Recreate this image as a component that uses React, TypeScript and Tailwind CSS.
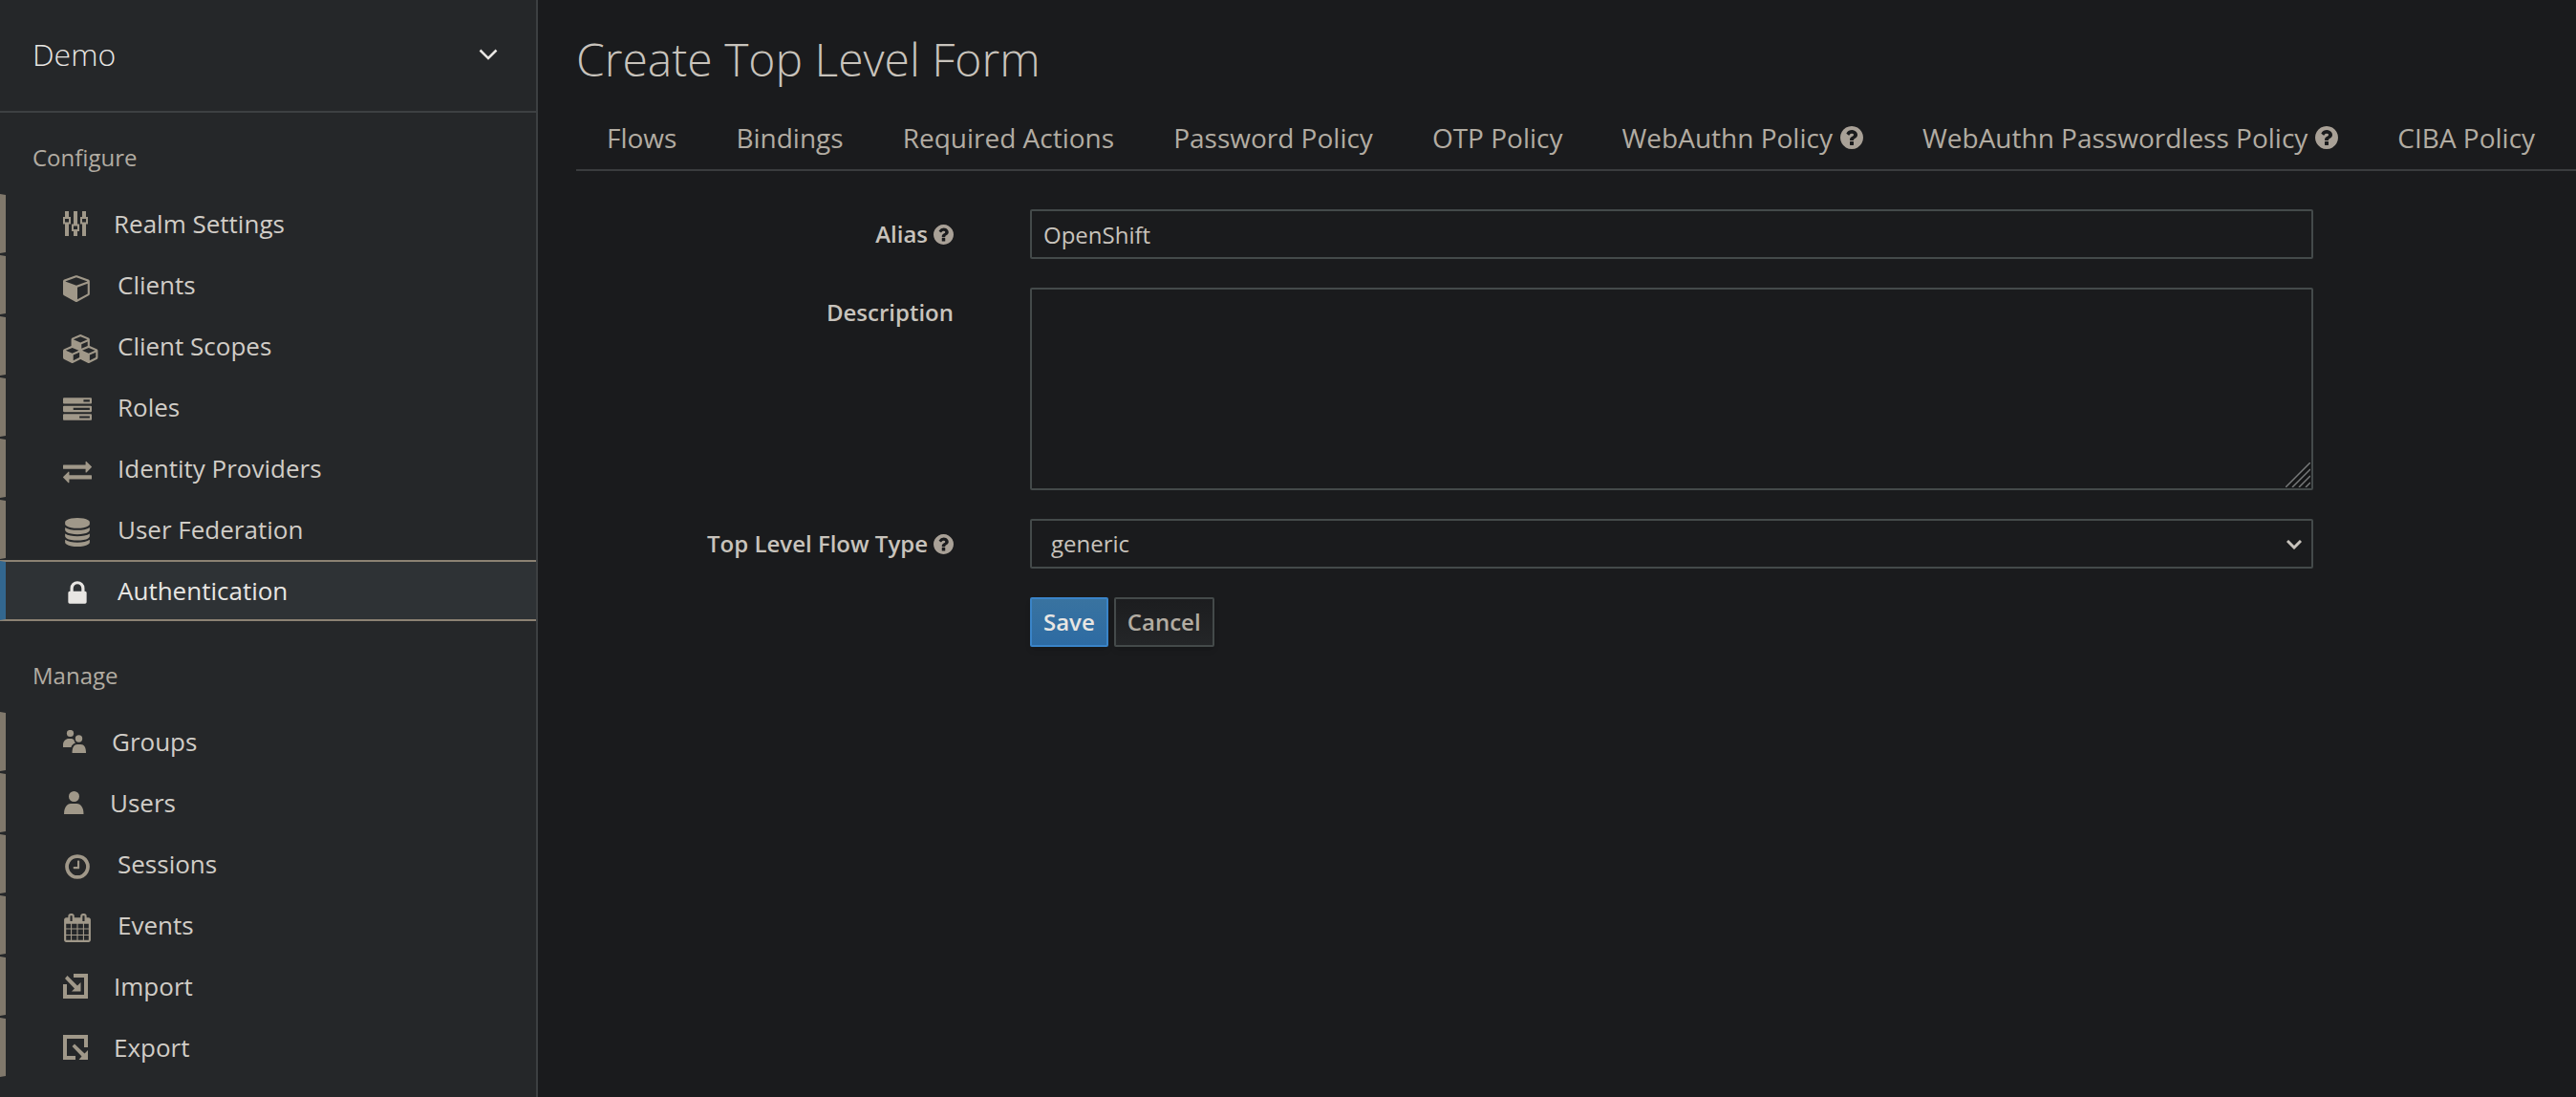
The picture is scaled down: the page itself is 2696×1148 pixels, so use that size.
import React from "react";

const PATHS = {
  cube: "M896 1629l640-349v-636l-640 233v752zm-64-865l698-254-698-254-698 254 698 254zm832-252v768q0 35-18 65t-49 47l-704 384q-28 16-61 16t-61-16l-704-384q-31-17-49-47t-18-65v-768q0-40 23-73t61-47l704-256q22-8 44-8t44 8l704 256q38 14 61 47t23 73z",
  cubes:
    "M640 1632l384-192v-314l-384 164v342zm-64-454l404-173-404-173-404 173 404 173zm1088 454l384-192v-314l-384 164v342zm-64-454l404-173-404-173-404 173 404 173zm-448-293l384-165v-266l-384 164v267zm-64-379l441-189-441-189-441 189 441 189zm1088 518v416q0 36-19 67t-52 47l-448 224q-25 14-57 14t-57-14l-448-224q-4-2-7-4-2 2-7 4l-448 224q-25 14-57 14t-57-14l-448-224q-33-16-52-47t-19-67v-416q0-38 21.5-70t56.5-48l434-186v-400q0-38 21.5-70t56.5-48l448-192q23-10 50-10t50 10l448 192q35 16 56.5 48t21.5 70v400l434 186q36 16 57 48t21 70z",
  tasks:
    "M1024 1408h640v-128h-640v128zm-384-512h1024v-128h-1024v128zm640-512h384v-128h-384v128zm512 832v256q0 26-19 45t-45 19h-1664q-26 0-45-19t-19-45v-256q0-26 19-45t45-19h1664q26 0 45 19t19 45zm0-512v256q0 26-19 45t-45 19h-1664q-26 0-45-19t-19-45v-256q0-26 19-45t45-19h1664q26 0 45 19t19 45zm0-512v256q0 26-19 45t-45 19h-1664q-26 0-45-19t-19-45v-256q0-26 19-45t45-19h1664q26 0 45 19t19 45z",
  exchange:
    "M1792 1184v192q0 13-9.500 22.500t-22.500 9.500h-1376v192q0 13-9.500 22.500t-22.500 9.500q-12 0-24-10l-319-320q-9-9-9-22 0-14 9-23l320-320q9-9 23-9 13 0 22.500 9.500t9.500 22.500v192h1376q13 0 22.500 9.500t9.500 22.500zm0-544q0 14-9 23l-320 320q-9 9-23 9-13 0-22.500-9.500t-9.500-22.500v-192h-1376q-13 0-22.500-9.500t-9.500-22.500v-192q0-13 9.500-22.500t22.500-9.500h1376v-192q0-14 9-23t23-9q12 0 24 10l319 319q9 9 9 23z",
  database:
    "M896 768q237 0 443-43t325-127v170q0 69-103 128t-280 93.500-385 34.500-385-34.500-280-93.500-103-128v-170q119 84 325 127t443 43zm0 768q237 0 443-43t325-127v170q0 69-103 128t-280 93.500-385 34.500-385-34.500-280-93.500-103-128v-170q119 84 325 127t443 43zm0-384q237 0 443-43t325-127v170q0 69-103 128t-280 93.500-385 34.500-385-34.500-280-93.500-103-128v-170q119 84 325 127t443 43zm0-1152q208 0 385 34.500t280 93.500 103 128v128q0 69-103 128t-280 93.500-385 34.500-385-34.500-280-93.500-103-128v-128q0-69 103-128t280-93.500 385-34.500z",
  lock: "M640 768h512v-192q0-106-75-181t-181-75-181 75-75 181v192zm832 96v576q0 40-28 68t-68 28h-960q-40 0-68-28t-28-68v-576q0-40 28-68t68-28h32v-192q0-184 132-316t316-132 316 132 132 316v192h32q40 0 68 28t28 68z",
  clock:
    "M1024 544v448q0 14-9 23t-23 9h-320q-14 0-23-9t-9-23v-64q0-14 9-23t23-9h224v-352q0-14 9-23t23-9h64q14 0 23 9t9 23zm416 352q0-148-73-273t-198-198-273-73-273 73-198 198-73 273 73 273 198 198 273 73 273-73 198-198 73-273zm224 0q0 209-103 385.500t-279.500 279.500-385.500 103-385.500-103-279.500-279.500-103-385.500 103-385.500 279.500-279.500 385.500-103 385.500 103 279.500 279.500 103 385.500z",
  calendar:
    "M192 1664h288v-288h-288v288zm352 0h320v-288h-320v288zm-352-352h288v-320h-288v320zm352 0h320v-320h-320v320zm-352-384h288v-288h-288v288zm736 736h320v-288h-320v288zm-384-736h320v-288h-320v288zm768 736h288v-288h-288v288zm-384-352h320v-320h-320v320zm-352-864v-288q0-13-9.500-22.500t-22.500-9.500h-64q-13 0-22.500 9.500t-9.500 22.500v288q0 13 9.500 22.500t22.500 9.500h64q13 0 22.500-9.500t9.500-22.500zm736 864h288v-320h-288v320zm-384-384h320v-288h-320v288zm384 0h288v-288h-288v288zm32-480v-288q0-13-9.500-22.500t-22.500-9.500h-64q-13 0-22.500 9.500t-9.500 22.500v288q0 13 9.500 22.500t22.500 9.500h64q13 0 22.500-9.500t9.500-22.500zm384-64v1280q0 52-38 90t-90 38h-1408q-52 0-90-38t-38-90v-1280q0-52 38-90t90-38h128v-96q0-66 47-113t113-47h64q66 0 113 47t47 113v96h384v-96q0-66 47-113t113-47h64q66 0 113 47t47 113v96h128q52 0 90 38t38 90z",
  question:
    "M1024 1376v-192q0-14-9-23t-23-9h-192q-14 0-23 9t-9 23v192q0 14 9 23t23 9h192q14 0 23-9t9-23zm256-672q0-88-55.500-163t-138.500-116-170-41q-243 0-371 213-15 24 8 42l132 100q7 6 19 6 16 0 25-12 53-68 86-92 34-24 86-24 48 0 85.500 26t37.500 59q0 38-20 61t-68 45q-63 28-115.500 86.500t-52.500 125.500v36q0 14 9 23t23 9h192q14 0 23-9t9-23q0-19 21.500-49.500t54.500-49.500q32-18 49-28.500t46-35 44.500-48 28-60.500 12.500-81zm384 192q0 209-103 385.500t-279.500 279.500-385.500 103-385.500-103-279.500-279.500-103-385.500 103-385.500 279.500-279.500 385.500-103 385.500 103 279.500 279.500 103 385.500z",
};

function Glyph({ path }: { path: string }) {
  return (
    <svg viewBox="0 0 1792 1792" className="mt-1.5 size-[30px] shrink-0 overflow-visible" fill="currentColor" aria-hidden="true">
      <path d={path} />
    </svg>
  );
}

function SlidersIcon() {
  return (
    <svg viewBox="0 0 26 26" className="size-[26px] shrink-0" fill="none" stroke="currentColor" aria-hidden="true">
      <path strokeWidth="4" d="M4 0v7M4 13v13M13 0v14M13 21v5M22 0v7M22 13v13" />
      <path strokeWidth="2" d="M1 7h6v5.500h-6zM10 14.500h6v5.500h-6zM19 7h6v5.500h-6z" />
    </svg>
  );
}

function GroupsIcon() {
  return (
    <svg viewBox="0 0 24 24" className="size-6 shrink-0" fill="currentColor" aria-hidden="true">
      <circle cx="7.500" cy="3.500" r="3.600" />
      <path d="M0 18v-2.500C0 11.500 3 9 6 9h3q1.500 0 2.500 1.500 .3 2 1.500 3Q9 15 8.500 18z" />
      <circle cx="16.500" cy="9" r="3.700" />
      <path d="M9.500 24c0-6 2-9 5.500-9h3.500c3.500 0 5.500 3 5.500 9z" />
    </svg>
  );
}

function UserIcon() {
  return (
    <svg viewBox="0 0 22 24" className="h-6 w-[22px] shrink-0" fill="currentColor" aria-hidden="true">
      <circle cx="11.500" cy="5.500" r="5.500" />
      <path d="M1 24c0-7 3-11 7-11h6.500c4 0 7 4 7 11z" />
    </svg>
  );
}

function ImportIcon() {
  return (
    <svg viewBox="0 0 26 26" className="size-[26px] shrink-0" fill="currentColor" aria-hidden="true">
      <path d="M11 0H26V26H0V11H4V22H22V4H11z" />
      <path d="M4.500 2L15 12.500L18.500 9V18.500H9L12 15.500L2 5z" />
    </svg>
  );
}

function ExportIcon() {
  return (
    <svg viewBox="0 0 26 26" className="size-[26px] shrink-0" fill="currentColor" aria-hidden="true">
      <path d="M0 0H26V13H22V4H4V22H13V26H0z" />
      <path d="M12 9.500L22.500 19.500L26 16V26H16.500L19.500 22.500L9.500 12z" />
    </svg>
  );
}

type Item = { label: string; icon: React.ReactNode; active?: boolean };

const CONFIGURE: Item[] = [
  { label: "Realm Settings", icon: <SlidersIcon /> },
  { label: "Clients", icon: <Glyph path={PATHS.cube} /> },
  { label: "Client Scopes", icon: <Glyph path={PATHS.cubes} /> },
  { label: "Roles", icon: <Glyph path={PATHS.tasks} /> },
  { label: "Identity Providers", icon: <Glyph path={PATHS.exchange} /> },
  { label: "User Federation", icon: <Glyph path={PATHS.database} /> },
  { label: "Authentication", icon: <Glyph path={PATHS.lock} />, active: true },
];

const MANAGE: Item[] = [
  { label: "Groups", icon: <GroupsIcon /> },
  { label: "Users", icon: <UserIcon /> },
  { label: "Sessions", icon: <Glyph path={PATHS.clock} /> },
  { label: "Events", icon: <Glyph path={PATHS.calendar} /> },
  { label: "Import", icon: <ImportIcon /> },
  { label: "Export", icon: <ExportIcon /> },
];

const TABS = [
  { label: "Flows" },
  { label: "Bindings" },
  { label: "Required Actions" },
  { label: "Password Policy" },
  { label: "OTP Policy" },
  { label: "WebAuthn Policy", help: true },
  { label: "WebAuthn Passwordless Policy", help: true },
  { label: "CIBA Policy" },
];

function NavGroup({ title, items }: { title: string; items: Item[] }) {
  return (
    <section>
      <h2 className="px-[34px] text-2xl text-[#b2aca2]">{title}</h2>
      <ul className="mt-[21px] -ml-1.5">
        {items.map((item) => (
          <li key={item.label}>
            <a
              href="#"
              aria-current={item.active ? "page" : undefined}
              className={
                item.active
                  ? "flex h-16 items-center gap-[27px] border-y-2 border-l-12 border-y-[#8c8273] border-l-[#33678f] bg-[#2e3235] pl-[60px] text-[26px] text-[#e8e6e3]"
                  : "flex h-16 items-center gap-[27px] border-y-2 border-l-12 border-y-transparent border-l-[#80786b] pl-[60px] text-[26px] text-[#d1cdc7]"
              }
            >
              <span className={item.active ? "flex text-[#e8e6e3]" : "flex text-[#a09889]"}>{item.icon}</span>
              {item.label}
            </a>
          </li>
        ))}
      </ul>
    </section>
  );
}

function Help({ className }: { className: string }) {
  return (
    <svg viewBox="128 128 1536 1536" className={className} fill="currentColor" role="img" aria-label="Help">
      <path d={PATHS.question} />
    </svg>
  );
}

function FieldLabel({ id, text, help }: { id: string; text: string; help?: boolean }) {
  return (
    <label htmlFor={id} className="flex h-[52px] items-center justify-end gap-1.5 text-2xl font-semibold whitespace-nowrap">
      {text}
      {help && <Help className="size-[21px] text-[#a9a197]" />}
    </label>
  );
}

export default function App() {
  return (
    <div className="flex min-h-screen bg-[#1a1b1d] font-['Open_Sans','Noto_Sans',sans-serif] text-[#c8c3bc]">
      <aside className="w-[563px] shrink-0 overflow-hidden border-r-2 border-[#3d4042] bg-[#252729]">
        <button
          type="button"
          className="flex h-[118px] w-full items-center justify-between border-b-2 border-[#3d4042] pr-10 pb-[2px] pl-[34px] text-[32px] font-light text-[#e8e6e3]"
        >
          Demo
          <svg viewBox="0 0 20 12" className="h-3 w-5" fill="none" stroke="currentColor" strokeWidth="2.5" aria-hidden="true">
            <path d="M1.500 1.500L10 10L18.500 1.500" />
          </svg>
        </button>
        <nav className="flex flex-col gap-[41px] pt-[31px]">
          <NavGroup title="Configure" items={CONFIGURE} />
          <NavGroup title="Manage" items={MANAGE} />
        </nav>
      </aside>

      <main className="min-w-0 flex-1 pl-10">
        <h1 className="pt-[30px] text-5xl leading-[64px] font-light">Create Top Level Form</h1>
        <ul className="flex h-[85px] items-center border-b-2 border-[#3a3c3e] pt-4 pl-px text-[28px] whitespace-nowrap text-[#b2aca2]">
          {TABS.map((tab) => (
            <li key={tab.label}>
              <a href="#" className="flex items-center gap-2 px-[31px]">
                {tab.label}
                {tab.help && <Help className="size-6 text-[#a9a197]" />}
              </a>
            </li>
          ))}
        </ul>

        <form className="mt-10 grid grid-cols-[395fr_1343fr_155fr] gap-x-20 gap-y-[30px] pr-10 text-2xl" onSubmit={(e) => e.preventDefault()}>
          <FieldLabel id="alias" text="Alias" help />
          <input
            id="alias"
            type="text"
            defaultValue="OpenShift"
            className="h-[52px] w-full rounded-[2px] border-2 border-[#444a4a] bg-transparent px-3 outline-none"
          />
          <span />

          <FieldLabel id="description" text="Description" />
          <div className="relative">
            <textarea
              id="description"
              className="block h-[212px] w-full resize-none rounded-[2px] border-2 border-[#444a4a] bg-transparent px-3 py-1 outline-none"
            />
            <svg viewBox="0 0 26 26" className="pointer-events-none absolute right-[3px] bottom-[3px] size-[26px]" fill="none" aria-hidden="true">
              <path d="M0 26L26 0V26z" fill="#141516" />
              <path d="M0 26L26 0M7 26L26 7M14 26L26 14M21 26L26 21" stroke="#77797a" strokeWidth="1.500" />
            </svg>
          </div>
          <span />

          <FieldLabel id="flow-type" text="Top Level Flow Type" help />
          <div className="relative">
            <select
              id="flow-type"
              className="block h-[52px] w-full appearance-none rounded-[2px] border-2 border-[#444a4a] bg-[#1a1b1d] px-5 outline-none"
            >
              <option>generic</option>
            </select>
            <svg
              viewBox="0 0 16 10"
              className="pointer-events-none absolute top-[22px] right-3 h-2.5 w-4"
              fill="none"
              stroke="currentColor"
              strokeWidth="3"
              aria-hidden="true"
            >
              <path d="M1 1L8 8L15 1" />
            </svg>
          </div>
          <span />

          <span />
          <div className="flex gap-1.5">
            <button
              type="submit"
              className="h-[52px] rounded-[2px] border-2 border-[#3a84c8] bg-linear-to-b from-[#3973a0] to-[#2d6ba3] px-3 font-semibold text-[#e8e6e3] shadow-md"
            >
              Save
            </button>
            <button
              type="button"
              className="h-[52px] rounded-[2px] border-2 border-[#444a4a] bg-linear-to-b from-[#1c1d1f] to-[#242628] px-3 font-semibold text-[#b2aca2] shadow-md"
            >
              Cancel
            </button>
          </div>
          <span />
        </form>
      </main>
    </div>
  );
}
